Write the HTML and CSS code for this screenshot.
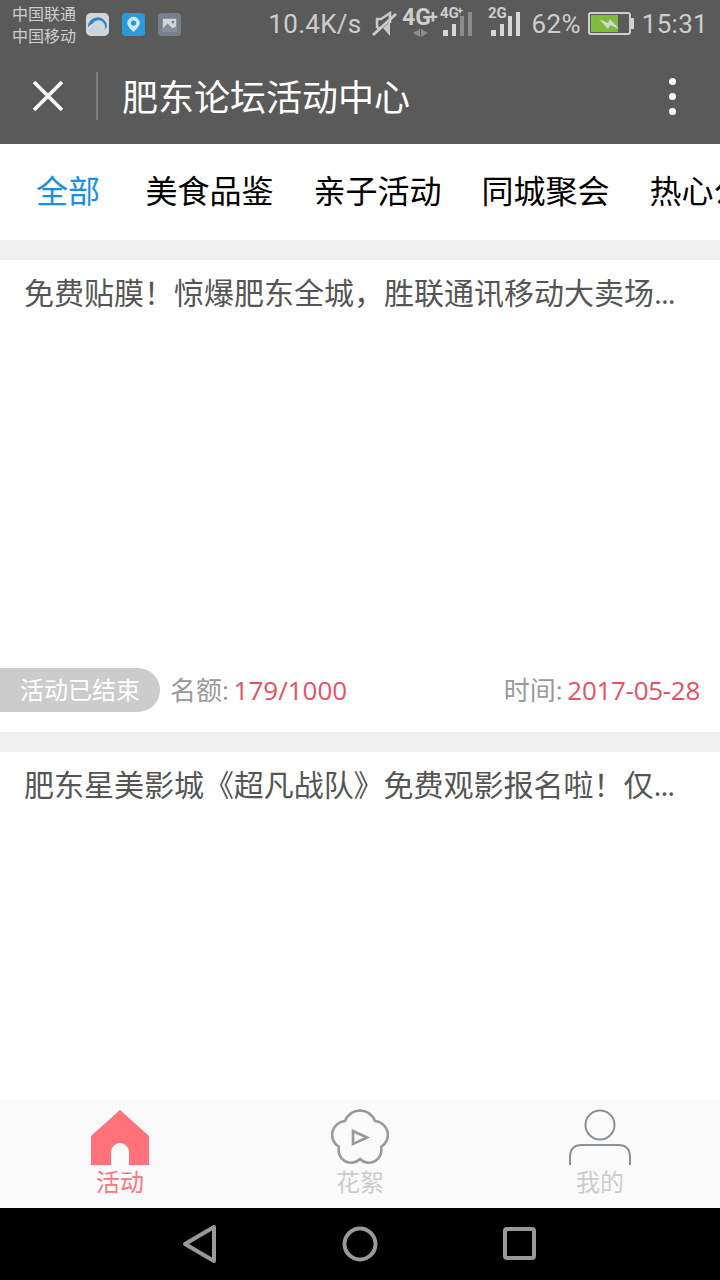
FILE: index.html
```html
<!DOCTYPE html>
<html lang="zh-CN">
<head>
    <meta charset="UTF-8">
    <meta name="viewport" content="width=device-width, initial-scale=1.0">
    <title>肥东论坛活动中心</title>
    <link rel="stylesheet" href="styles.css">
</head>
<body>
<div class="page">

    <div class="status-bar">
        <div class="carrier"><span>中国联通</span><span>中国移动</span></div>
        <div class="notify-icons">
            <svg class="app-icon" viewBox="0 0 24 24">
                <rect width="24" height="24" rx="5" fill="#d4d6d8"/>
                <path d="M2 15A10 10 0 1 1 22 14L19 18A6 6 0 0 0 7 11Q4 12 2 15Z" fill="#2b86d0"/>
                <path d="M3 17Q8 10 12 14T19 20Q10 23 5 21Z" fill="#c3d6e6"/>
            </svg>
            <svg class="app-icon" viewBox="0 0 24 24">
                <rect width="24" height="24" rx="4" fill="#2a9ad8"/>
                <path d="M12 4A6.500 6.500 0 0 1 18.500 10.500C18.500 14 14 18 12 20C10 18 5.500 14 5.500 10.500A6.500 6.500 0 0 1 12 4Z" fill="#cfe6f4"/>
                <circle cx="12" cy="10.500" r="2.800" fill="#2a9ad8"/>
            </svg>
            <svg class="app-icon" viewBox="0 0 24 24">
                <rect width="24" height="24" rx="4" fill="#77808a"/>
                <rect x="5" y="6" width="14" height="13" fill="#d3d6d9"/>
                <path d="M5 16L10 11L15 16L19 14V19H5Z" fill="#868e96"/>
                <circle cx="15.500" cy="9.500" r="1.500" fill="#77808a"/>
            </svg>
        </div>
        <div class="status-right">
            <span class="net-speed">10.4K/s</span>
            <svg class="sys-icons" width="150" height="48" viewBox="0 0 150 48">
                <path d="M5 28V19H9L18 13V23M5 28H9" fill="none" stroke="#c9c9c9" stroke-width="2.500"/>
                <path d="M11 28L18 36V22Z" fill="#c9c9c9"/>
                <path d="M1 35L24 14" fill="none" stroke="#c9c9c9" stroke-width="3"/>
                <text class="sig-main" x="30" y="25">4G</text>
                <text class="sig-plus" x="56" y="23">+</text>
                <path d="M48 29V37L41 33ZM49 29V37L56 33Z" fill="#8c8c8c"/>
                <text class="sig-small" x="68" y="18">4G</text>
                <text class="sig-sup" x="85" y="14">+</text>
                <g fill="#d6d6d6">
                    <rect x="71" y="30" width="5" height="6"/>
                    <rect x="80" y="24" width="4" height="12"/>
                    <rect x="119" y="30" width="5" height="6"/>
                    <rect x="128" y="24" width="4" height="12"/>
                    <rect x="136" y="16" width="4" height="20"/>
                    <rect x="144" y="12" width="4" height="24"/>
                </g>
                <g fill="#8c8c8c">
                    <rect x="88" y="16" width="4" height="20"/>
                    <rect x="96" y="12" width="4" height="24"/>
                </g>
                <text class="sig-small" x="116" y="18">2G</text>
            </svg>
            <span class="battery-pct">62%</span>
            <svg class="battery" width="46" height="24" viewBox="0 0 46 24">
                <rect x="1" y="1" width="41" height="21" rx="2" fill="none" stroke="#cfcfcf" stroke-width="2"/>
                <rect x="43" y="6" width="3" height="11" fill="#cfcfcf"/>
                <rect x="3" y="3" width="27" height="17" fill="#7fbc3c"/>
                <path d="M11 7L20 11L22 7L31 17L22 13L20 17Z" fill="#d6d6d6"/>
            </svg>
            <span class="clock">15:31</span>
        </div>
    </div>

    <div class="title-bar">
        <svg class="close-icon" width="32" height="32" viewBox="0 0 32 32">
            <path d="M2 2L30 30M30 2L2 30" stroke="#fff" stroke-width="3.500" fill="none"/>
        </svg>
        <div class="title-divider"></div>
        <div class="title-text">肥东论坛活动中心</div>
        <div class="more-dots"><i></i><i></i><i></i></div>
    </div>

    <div class="tabs">
        <span class="tab active">全部</span>
        <span class="tab">美食品鉴</span>
        <span class="tab">亲子活动</span>
        <span class="tab">同城聚会</span>
        <span class="tab">热心公益</span>
    </div>

    <div class="list">
        <div class="card">
            <div class="card-title">免费贴膜！惊爆肥东全城，胜联通讯移动大卖场<span class="more">...</span></div>
            <div class="card-pic"></div>
            <div class="card-foot">
                <span class="tag">活动已结束</span>
                <span class="meta">名额: <em>179/1000</em></span>
                <span class="meta meta-date">时间: <em>2017-05-28</em></span>
            </div>
        </div>
        <div class="card">
            <div class="card-title">肥东星美影城《 超凡战队 》免费观影报名啦！仅<span class="more">...</span></div>
            <div class="card-pic"></div>
        </div>
    </div>

    <div class="bottom-tabs">
        <div class="bottom-tab current">
            <svg width="58" height="56" viewBox="0 0 58 56">
                <path d="M29 1L58 27V56H38V43A9 9 0 0 0 20 43V56H0V27Z" fill="#ff717b"/>
            </svg>
            <span>活动</span>
        </div>
        <div class="bottom-tab">
            <svg width="58" height="56" viewBox="0 0 58 56">
                <path d="M14 12A16 16 0 0 1 44 12A14 14 0 0 1 50 38A12.500 12.500 0 0 1 29 50A12.500 12.500 0 0 1 8 38A14 14 0 0 1 14 12Z" fill="none" stroke="#999" stroke-width="2.600" stroke-linejoin="round"/>
                <path d="M22 22L36 28.500L22 35Z" fill="none" stroke="#999" stroke-width="2.600"/>
            </svg>
            <span>花絮</span>
        </div>
        <div class="bottom-tab">
            <svg width="64" height="56" viewBox="0 0 64 56">
                <circle cx="32" cy="16" r="14.500" fill="none" stroke="#8a9096" stroke-width="2"/>
                <path d="M2 56V48Q2 36 14 36H50Q62 36 62 48V56" fill="none" stroke="#8a9096" stroke-width="2"/>
            </svg>
            <span>我的</span>
        </div>
    </div>

    <div class="nav-bar">
        <svg width="36" height="40" viewBox="0 0 36 40">
            <path d="M32 3V37L3 20Z" fill="none" stroke="#999" stroke-width="4" stroke-linejoin="round"/>
        </svg>
        <svg width="36" height="36" viewBox="0 0 36 36">
            <circle cx="18" cy="18" r="15.500" fill="none" stroke="#999" stroke-width="4"/>
        </svg>
        <svg width="36" height="36" viewBox="0 0 36 36">
            <rect x="3" y="3" width="29" height="29" rx="2" fill="none" stroke="#999" stroke-width="4"/>
        </svg>
    </div>

</div>
</body>
</html>
```

FILE: styles.css
```css
body {
    margin: 0;
    font-family: "Open Sans", "Noto Sans CJK SC", sans-serif;
}

.page {
    display: flex;
    flex-direction: column;
    width: 720px;
    height: 1280px;
    overflow: hidden;
    background: #fff;
}

/* top of the phone */
.status-bar {
    display: flex;
    align-items: center;
    height: 48px;
    padding-left: 12px;
    background: #5a5a5a;
    color: #cdcdcd;
    flex-shrink: 0;
}

.carrier {
    display: flex;
    flex-direction: column;
    width: 74px;
    font-size: 16px;
    line-height: 22px;
    font-family: "Noto Sans CJK SC", sans-serif;
}

.notify-icons {
    display: flex;
    gap: 13px;
}

.app-icon {
    width: 23px;
    height: 23px;
}

.status-right {
    display: flex;
    align-items: center;
    margin-left: auto;
    padding-right: 12px;
    font-family: Roboto, sans-serif;
    font-size: 26px;
    letter-spacing: 0.3px;
}

.sys-icons {
    display: block;
    margin: 0 10px;
}

.sig-main, .sig-plus, .sig-small, .sig-sup {
    font-family: Roboto, sans-serif;
    font-weight: 700;
    fill: #cdcdcd;
    letter-spacing: 0;
}

.sig-main { font-size: 23px; }
.sig-plus { font-size: 18px; }
.sig-small { font-size: 15px; }
.sig-sup { font-size: 11px; }

.battery {
    margin: 0 8px 0 7px;
}

.title-bar {
    display: flex;
    align-items: center;
    height: 96px;
    background: #5a5a5a;
    flex-shrink: 0;
}

.close-icon {
    margin-left: 32px;
}

.title-divider {
    width: 2px;
    height: 48px;
    margin-left: 32px;
    background: #7f7f7f;
}

.title-text {
    margin-left: 24px;
    margin-bottom: 2px;
    font-size: 36px;
    color: #fff;
}

.more-dots {
    display: flex;
    flex-direction: column;
    gap: 8px;
    margin-left: auto;
    margin-right: 44px;
}

.more-dots i {
    width: 7px;
    height: 7px;
    border-radius: 50%;
    background: #fff;
}

/* category strip */
.tabs {
    display: flex;
    align-items: center;
    gap: 40px;
    height: 96px;
    box-sizing: border-box;
    padding: 0 0 7px 36px;
    overflow: hidden;
    white-space: nowrap;
    flex-shrink: 0;
}

.tab {
    font-size: 32px;
    color: #000;
    flex-shrink: 0;
}

.tab.active {
    color: #1a8fe3;
    margin-right: 5.5px;
}

.list {
    flex: 1;
    min-height: 0;
    overflow: hidden;
    padding-top: 20px;
    background: #eee;
}

.card {
    margin-bottom: 20px;
    padding-bottom: 20px;
    background: #fff;
}

.card-title {
    height: 68px;
    padding-left: 24px;
    font-size: 30px;
    line-height: 66px;
    color: #555;
    white-space: nowrap;
    word-spacing: -8px;
}

.card-title .more {
    letter-spacing: -1px;
}

.card-pic {
    height: 340px;
}

.card-foot {
    display: flex;
    align-items: center;
    height: 44px;
    padding-right: 20px;
}

.tag {
    width: 140px;
    height: 44px;
    padding-left: 20px;
    border-radius: 0 22px 22px 0;
    background: #ccc;
    color: #fff;
    font-size: 24px;
    line-height: 43px;
}

.meta {
    margin-left: 10px;
    margin-bottom: 2px;
    font-size: 26px;
    color: #999;
    word-spacing: -2px;
}

.meta em {
    font-style: normal;
    color: #e9505f;
}

.meta-date {
    margin-left: auto;
}

.meta-date em {
    letter-spacing: -0.3px;
}

.bottom-tabs {
    display: flex;
    height: 108px;
    background: #fafafa;
    flex-shrink: 0;
}

.bottom-tab {
    display: flex;
    flex: 1;
    flex-direction: column;
    align-items: center;
    padding-top: 9px;
    box-sizing: border-box;
    color: #ccc;
    font-size: 24px;
    line-height: 34px;
}

.bottom-tab svg {
    display: block;
}

.bottom-tab.current {
    color: #ff7480;
}

.nav-bar {
    display: flex;
    justify-content: center;
    align-items: center;
    gap: 124px;
    height: 72px;
    background: #000;
    flex-shrink: 0;
}
```
